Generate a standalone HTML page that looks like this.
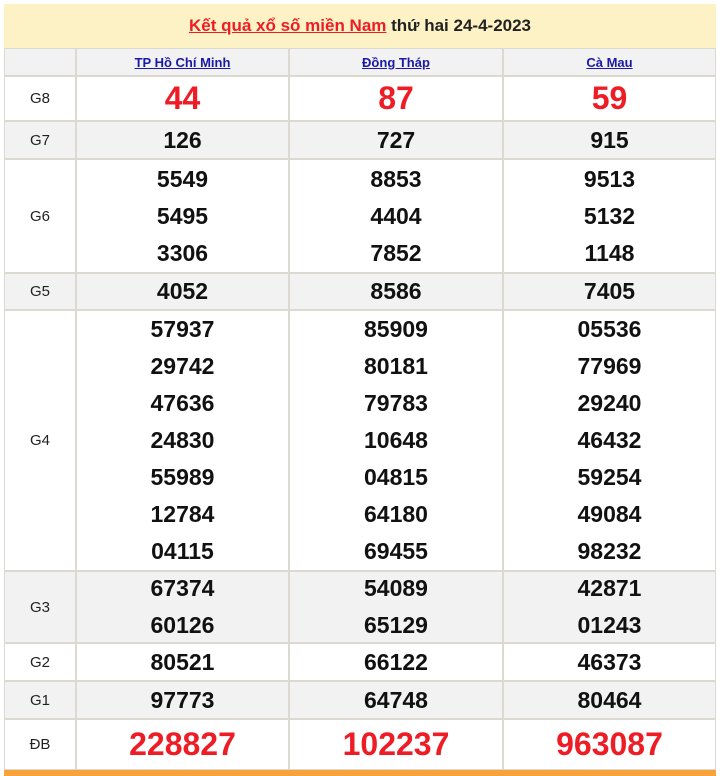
<!DOCTYPE html><html><head><meta charset="utf-8"><style>
body{margin:0;width:720px;height:776px;background:#fff;font-family:"Liberation Sans",Arial,sans-serif;position:relative;overflow:hidden}
.c{position:absolute;box-sizing:border-box;border:1px solid #dcd8d2;display:flex;flex-direction:column;align-items:center;justify-content:center;text-align:center}
.n{font-weight:bold;font-size:23px;color:#111;line-height:37px}
.r{font-weight:bold;font-size:32px;color:#ee1c25}
.l{font-size:15px;color:#222}
a{color:#1a1aa6;font-weight:bold;font-size:13px;text-decoration:underline}
</style></head><body>
<div class="c" style="left:4px;top:4px;width:712px;height:44px;background:#fdf2c6;border:none;flex-direction:row;font-weight:bold;font-size:17px"><span style="color:#ee1c25;text-decoration:underline">Kết quả xổ số miền Nam</span>&nbsp;<span style="color:#222">thứ hai 24-4-2023</span></div>
<div id="t"></div>
<div style="position:absolute;left:4px;top:770px;width:712px;height:6px;background:#f7a23a"></div>
<script>
const X=[4,76,289,503,716];
const rows=[
[48,76,'#f2f2f2','',null,[['<a>TP Hồ Chí Minh</a>'],['<a>Đồng Tháp</a>'],['<a>Cà Mau</a>']]],
[76,121,'#fff','G8','r',[['44'],['87'],['59']]],
[121,159,'#f2f2f2','G7','n',[['126'],['727'],['915']]],
[159,273,'#fff','G6','n',[['5549','5495','3306'],['8853','4404','7852'],['9513','5132','1148']]],
[273,310,'#f2f2f2','G5','n',[['4052'],['8586'],['7405']]],
[310,571,'#fff','G4','n',[['57937','29742','47636','24830','55989','12784','04115'],['85909','80181','79783','10648','04815','64180','69455'],['05536','77969','29240','46432','59254','49084','98232']]],
[571,643,'#f2f2f2','G3','n',[['67374','60126'],['54089','65129'],['42871','01243']]],
[643,681,'#fff','G2','n',[['80521'],['66122'],['46373']]],
[681,719,'#f2f2f2','G1','n',[['97773'],['64748'],['80464']]],
[719,770,'#fff','ĐB','r',[['228827'],['102237'],['963087']]]];
let h='';
for(const [y0,y1,bg,lab,cls,cols] of rows){
h+=`<div class="c l" style="left:${X[0]}px;top:${y0}px;width:${X[1]-X[0]}px;height:${y1-y0}px;background:${bg}">${lab}</div>`;
cols.forEach((v,i)=>{h+=`<div class="c" style="left:${X[i+1]}px;top:${y0}px;width:${X[i+2]-X[i+1]}px;height:${y1-y0}px;background:${bg}">`+v.map(s=>cls?`<div class="${cls}">${s}</div>`:s).join('')+`</div>`;});
}
document.getElementById('t').innerHTML=h;
</script>
</body></html>
